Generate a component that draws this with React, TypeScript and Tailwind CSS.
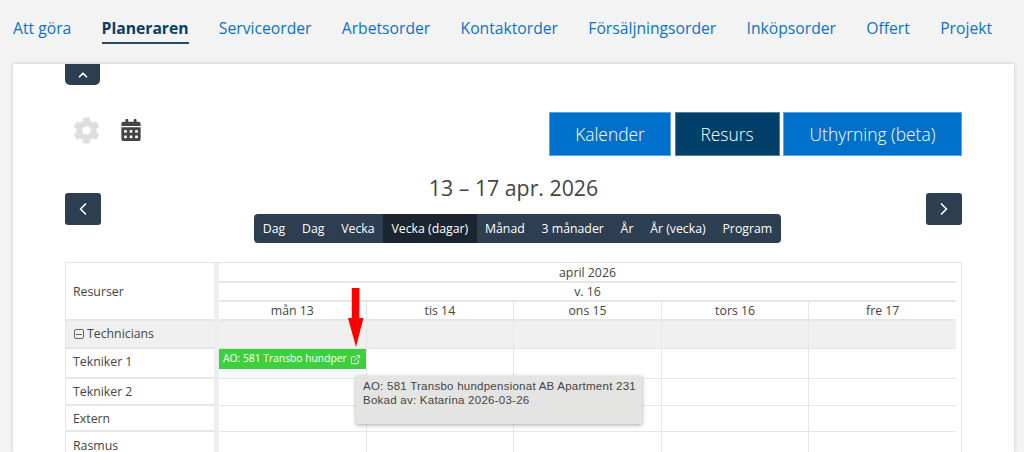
import React from "react";
import { FaCog, FaCalendarAlt } from "react-icons/fa";
import { FiExternalLink } from "react-icons/fi";
import { ChevronLeft, ChevronRight, ChevronUp } from "lucide-react";

const nav = ["Att göra", "Planeraren", "Serviceorder", "Arbetsorder", "Kontaktorder", "Försäljningsorder", "Inköpsorder", "Offert", "Projekt"];
const views = ["Dag", "Dag", "Vecka", "Vecka (dagar)", "Månad", "3 månader", "År", "År (vecka)", "Program"];
const days = ["mån 13", "tis 14", "ons 15", "tors 16", "fre 17"];

function Cells({ h, grey = false }: { h: string; grey?: boolean }) {
  return (
    <div className={`flex border-b border-[#e6e6e6] ${h} ${grey ? "bg-[#f0f0f0]" : ""}`}>
      {days.map((d) => (
        <div key={d} className="flex-1 border-l border-[#e6e6e6] first:border-l-0" />
      ))}
    </div>
  );
}

export default function App() {
  return (
    <div className="h-[452px] overflow-hidden bg-[#f3f3f3] font-['Open_Sans',sans-serif] text-[#444]">
      <nav className="flex h-[64px] gap-[30.3px] pl-[13px] pt-[17px] text-[15.7px] text-[#0b72c9]">
        {nav.map((n) =>
          n === "Planeraren" ? (
            <span key={n} className="h-[27px] border-b-2 border-[#2a4a68] font-bold text-[#073f69]">{n}</span>
          ) : (
            <span key={n} className="h-[27px]">{n}</span>
          )
        )}
      </nav>

      <main className="relative ml-[13px] mr-[10px] h-[388px] bg-white pl-[52px] pr-[52px] shadow-[0_0_4px_rgba(0,0,0,0.2)]">
        <div className="flex h-[21px] w-[35px] items-center justify-center rounded-b-[5px] bg-[#2c3e50] text-white">
          <ChevronUp size={14} strokeWidth={3} />
        </div>

        <div className="mt-[27px] flex h-[44px] items-start justify-between">
          <div className="flex items-start gap-[20px] pl-[8px] pt-[5px]">
            <FaCog size={27} className="text-[#dedede]" />
            <FaCalendarAlt size={22} className="mt-[2px] text-[#444]" />
          </div>
          <div className="flex gap-[3.5px] text-[17.4px] font-light text-white">
            <span className="flex h-[44px] w-[122px] items-center justify-center border border-[#5ea5e0] bg-[#0071cb]">Kalender</span>
            <span className="flex h-[44px] w-[105px] items-center justify-center border border-[#5a8099] bg-[#003f6a]">Resurs</span>
            <span className="flex h-[44px] w-[179px] items-center justify-center border border-[#5ea5e0] bg-[#0071cb]">Uthyrning (beta)</span>
          </div>
        </div>

        <div className="mt-[17px] flex items-start justify-between">
          <button className="mt-[20px] flex h-[32px] w-[36px] items-center justify-center rounded-[3px] bg-[#2c3e50] text-white">
            <ChevronLeft size={20} strokeWidth={2} />
          </button>
          <div className="flex flex-col items-center">
            <h1 className="h-[41px] text-[21.3px] leading-[30px] text-[#444]">13 – 17 apr. 2026</h1>
            <div className="ml-[8px] flex h-[29px] overflow-hidden rounded-[4px] bg-[#2c3e50] text-[12.3px] text-white">
              {views.map((v, i) => (
                <span key={i} className={`flex items-center px-[8.4px] pt-[2px] ${v === "Vecka (dagar)" ? "bg-[#1a252f]" : ""}`}>{v}</span>
              ))}
            </div>
          </div>
          <button className="mt-[20px] flex h-[32px] w-[36px] items-center justify-center rounded-[3px] bg-[#2c3e50] text-white">
            <ChevronRight size={20} strokeWidth={2} />
          </button>
        </div>

        <div className="mt-[19px] flex border border-[#e6e6e6] pr-[5px] text-[12.3px]">
          <div className="box-content w-[148px] shrink-0 border-r-[5px] border-[#eeeeee]">
            <div className="flex h-[58px] items-center border-b-2 border-[#e6e6e6] pl-[7px] pt-[3px]">Resurser</div>
            <div className="flex h-[28px] items-center gap-[3px] border-b-2 border-[#e6e6e6] bg-[#f0f0f0] pl-[8px]">
              <span className="flex h-[10px] w-[10px] items-center justify-center rounded-[2px] border border-[#666]">
                <span className="h-px w-[6px] bg-[#666]" />
              </span>
              Technicians
            </div>
            <div className="flex h-[30px] items-center border-b-2 border-[#e6e6e6] pb-[2px] pl-[7px]">Tekniker 1</div>
            <div className="flex h-[27px] items-center border-b-2 border-[#e6e6e6] pl-[7px] pt-[2px]">Tekniker 2</div>
            <div className="flex h-[26px] items-center border-b-2 border-[#e6e6e6] pl-[7px] pt-[3px]">Extern</div>
            <div className="flex h-[26px] items-center pl-[7px] pt-[2px]">Rasmus</div>
          </div>

          <div className="flex-1">
            <div className="flex h-[20px] items-center justify-center border-b-2 border-[#e6e6e6] pt-[2px]">april 2026</div>
            <div className="flex h-[19px] items-center justify-center border-b-2 border-[#e6e6e6] pt-px">v. 16</div>
            <div className="flex h-[19px] border-b-2 border-[#e6e6e6]">
              {days.map((d) => (
                <div key={d} className="flex flex-1 items-center justify-center border-l border-[#e6e6e6] pt-px first:border-l-0">{d}</div>
              ))}
            </div>
            <Cells h="h-[28px]" grey />
            <div className="relative">
              <Cells h="h-[30px]" />
              <div className="absolute left-0 top-0 h-[29px] w-[147px] bg-[#f5fbfd]">
                <div className="flex h-[20px] items-center justify-between bg-[#3ecf3e] pl-[4px] pr-[5px] text-[10.3px] text-white">
                  <span className="whitespace-nowrap">AO: 581 Transbo hundper</span>
                  <FiExternalLink size={11} />
                </div>
              </div>
            </div>
            <Cells h="h-[27px]" />
            <Cells h="h-[26px]" />
            <Cells h="h-[26px]" />
          </div>
        </div>

        <svg className="absolute left-[335px] top-[224px]" width="16" height="60" viewBox="0 0 16 60">
          <rect x="3.8" y="0" width="7.6" height="31" fill="#ff0000" />
          <polygon points="0,30 15.5,30 8,59" fill="#ff0000" />
        </svg>

        <div className="absolute left-[343px] top-[312px] h-[48px] w-[286px] bg-[#e4e4e2] px-[7px] pt-[3px] font-['Liberation_Sans',sans-serif] text-[11.5px] leading-[14px] tracking-[0.25px] text-[#444] shadow-[0_1px_4px_rgba(0,0,0,0.35)]">
          <div className="whitespace-nowrap">AO: 581 Transbo hundpensionat AB Apartment 231</div>
          <div className="whitespace-nowrap">Bokad av: Katarina 2026-03-26</div>
        </div>
      </main>
    </div>
  );
}
